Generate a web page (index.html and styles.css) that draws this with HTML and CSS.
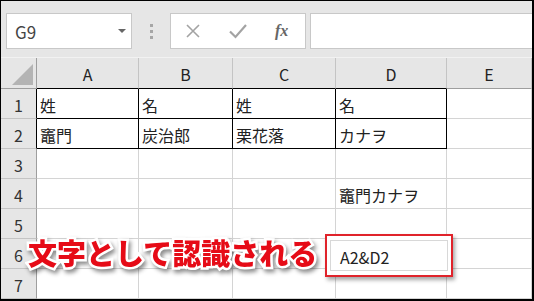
FILE: index.html
```html
<!DOCTYPE html>
<html lang="ja">
<head>
    <meta charset="UTF-8">
    <title>文字として認識される</title>
    <link rel="stylesheet" href="styles.css">
</head>
<body>
    <div class="frame">
        <div class="toolbar">
            <div class="name-box">
                <span>G9</span>
                <span class="arrow"></span>
            </div>
            <div class="dots"><i></i><i></i><i></i></div>
            <div class="fx-buttons">
                <svg width="16" height="16" viewBox="0 0 16 16">
                    <path d="M2 2 L14 14 M14 2 L2 14" stroke="#a3a3a3" stroke-width="1.6" fill="none"/>
                </svg>
                <svg width="20" height="16" viewBox="0 0 20 16">
                    <path d="M2 8.5 L7.5 14 L18 2" stroke="#a3a3a3" stroke-width="2.2" fill="none"/>
                </svg>
                <span class="fx">fx</span>
            </div>
            <div class="formula-bar"></div>
        </div>

        <div class="sheet">
            <div class="corner"><span class="tri"></span></div>
            <div class="col-head">A</div>
            <div class="col-head">B</div>
            <div class="col-head">C</div>
            <div class="col-head">D</div>
            <div class="col-head">E</div>

            <div class="row-head edge">1</div>
            <div class="cell box">姓</div>
            <div class="cell box">名</div>
            <div class="cell box">姓</div>
            <div class="cell box">名</div>
            <div class="cell"></div>

            <div class="row-head edge">2</div>
            <div class="cell box">竈門</div>
            <div class="cell box">炭治郎</div>
            <div class="cell box">栗花落</div>
            <div class="cell box">カナヲ</div>
            <div class="cell"></div>

            <div class="row-head">3</div>
            <div class="cell"></div>
            <div class="cell"></div>
            <div class="cell"></div>
            <div class="cell"></div>
            <div class="cell"></div>

            <div class="row-head">4</div>
            <div class="cell"></div>
            <div class="cell"></div>
            <div class="cell"></div>
            <div class="cell">竈門カナヲ</div>
            <div class="cell"></div>

            <div class="row-head">5</div>
            <div class="cell"></div>
            <div class="cell"></div>
            <div class="cell"></div>
            <div class="cell"></div>
            <div class="cell"></div>

            <div class="row-head">6</div>
            <div class="cell"></div>
            <div class="cell"></div>
            <div class="cell"></div>
            <div class="cell"></div>
            <div class="cell"></div>

            <div class="row-head">7</div>
            <div class="cell"></div>
            <div class="cell"></div>
            <div class="cell"></div>
            <div class="cell"></div>
            <div class="cell"></div>
        </div>

        <!-- annotation over the sheet -->
        <div class="callout">文字として認識される</div>
        <div class="highlight">
            <div class="highlight-cell">A2&amp;D2</div>
        </div>
    </div>
</body>
</html>
```

FILE: styles.css
```css
* {
    margin: 0;
    padding: 0;
    box-sizing: border-box;
}

body {
    font-family: "Noto Sans CJK JP", "Noto Sans", sans-serif;
    background: #fff;
}

.frame {
    position: relative;
    width: 534px;
    height: 301px;
    border: 1px solid #000;
    border-right-width: 2px;
    border-bottom-width: 2px;
    overflow: hidden;
}

/* top bar */
.toolbar {
    height: 57px;
    background: #e6e6e6;
    display: flex;
    align-items: flex-start;
    padding: 12px 0 0 5px;
    border-bottom: 1px solid #f2f2f2;
}

.name-box {
    width: 126px;
    height: 36px;
    background: #fff;
    border: 1px solid #c8c8c8;
    display: flex;
    align-items: center;
    justify-content: space-between;
    padding: 0 5px 0 8px;
    font-size: 17px;
    color: #444;
}

.arrow {
    width: 0;
    height: 0;
    border-left: 4px solid transparent;
    border-right: 4px solid transparent;
    border-top: 4px solid #666;
}

.dots {
    width: 38px;
    height: 36px;
    display: flex;
    flex-direction: column;
    align-items: center;
    justify-content: center;
    gap: 3px;
}

.dots i {
    width: 3px;
    height: 3px;
    background: #a6a6a6;
}

.fx-buttons {
    width: 136px;
    height: 36px;
    background: #fff;
    border: 1px solid #c8c8c8;
    display: flex;
    align-items: center;
    gap: 27px;
    padding-left: 14px;
}

.fx {
    font-family: "Liberation Serif", serif;
    font-style: italic;
    font-weight: bold;
    font-size: 16px;
    color: #666;
}

.formula-bar {
    flex: 1;
    height: 36px;
    margin-left: 4px;
    background: #fff;
    border: 1px solid #c8c8c8;
    border-right: none;
}

/* sheet grid */
.sheet {
    display: grid;
    grid-template-columns: 36px 102px 94px 103px 111px 1fr;
    grid-template-rows: 31px repeat(7, 30px);
}

.sheet > div {
    border-right: 1px solid #d4d4d4;
    border-bottom: 1px solid #d4d4d4;
}

.corner {
    background: #e6e6e6;
    position: relative;
    border-right-color: #9e9e9e !important;
    border-bottom-color: #9e9e9e !important;
}

.tri {
    position: absolute;
    right: 3px;
    bottom: 3px;
    width: 0;
    height: 0;
    border-left: 21px solid transparent;
    border-bottom: 21px solid #b4b4b4;
}

.col-head {
    background: #e6e6e6;
    border-right-color: #c4c4c4 !important;
    border-bottom-color: #9e9e9e !important;
    display: flex;
    align-items: center;
    justify-content: center;
    font-size: 16px;
    color: #222;
    padding-top: 2px;
}

.col-head:nth-child(-n+5) {
    border-bottom-color: #000 !important;
}

.row-head {
    background: #e6e6e6;
    border-right-color: #9e9e9e !important;
    border-bottom-color: #c4c4c4 !important;
    display: flex;
    align-items: center;
    justify-content: center;
    font-size: 16px;
    color: #333;
    padding-top: 2px;
}

.row-head.edge {
    border-right-color: #000 !important;
}

.cell {
    display: flex;
    align-items: center;
    padding: 3px 0 0 3px;
    font-size: 16px;
    color: #222;
    white-space: nowrap;
}

.cell.box {
    border-right-color: #000;
    border-bottom-color: #000;
}

/* annotation */
.callout {
    position: absolute;
    left: 27px;
    top: 231px;
    font-size: 29px;
    font-weight: 900;
    line-height: 40px;
    color: #e60b17;
    -webkit-text-stroke: 5px #fff;
    paint-order: stroke fill;
    filter: drop-shadow(2px 3px 2px rgba(0, 0, 0, 0.45));
    white-space: nowrap;
}

.highlight {
    position: absolute;
    left: 324px;
    top: 233px;
    width: 128px;
    height: 43px;
    border: 2px solid #e0232b;
    background: #fff;
    padding: 4px 3px;
    box-shadow: 2px 3px 4px rgba(0, 0, 0, 0.35);
}

.highlight-cell {
    height: 100%;
    border: 1px solid #d8d8d8;
    display: flex;
    align-items: center;
    padding: 2px 0 0 9px;
    font-size: 16px;
    color: #222;
}
```
